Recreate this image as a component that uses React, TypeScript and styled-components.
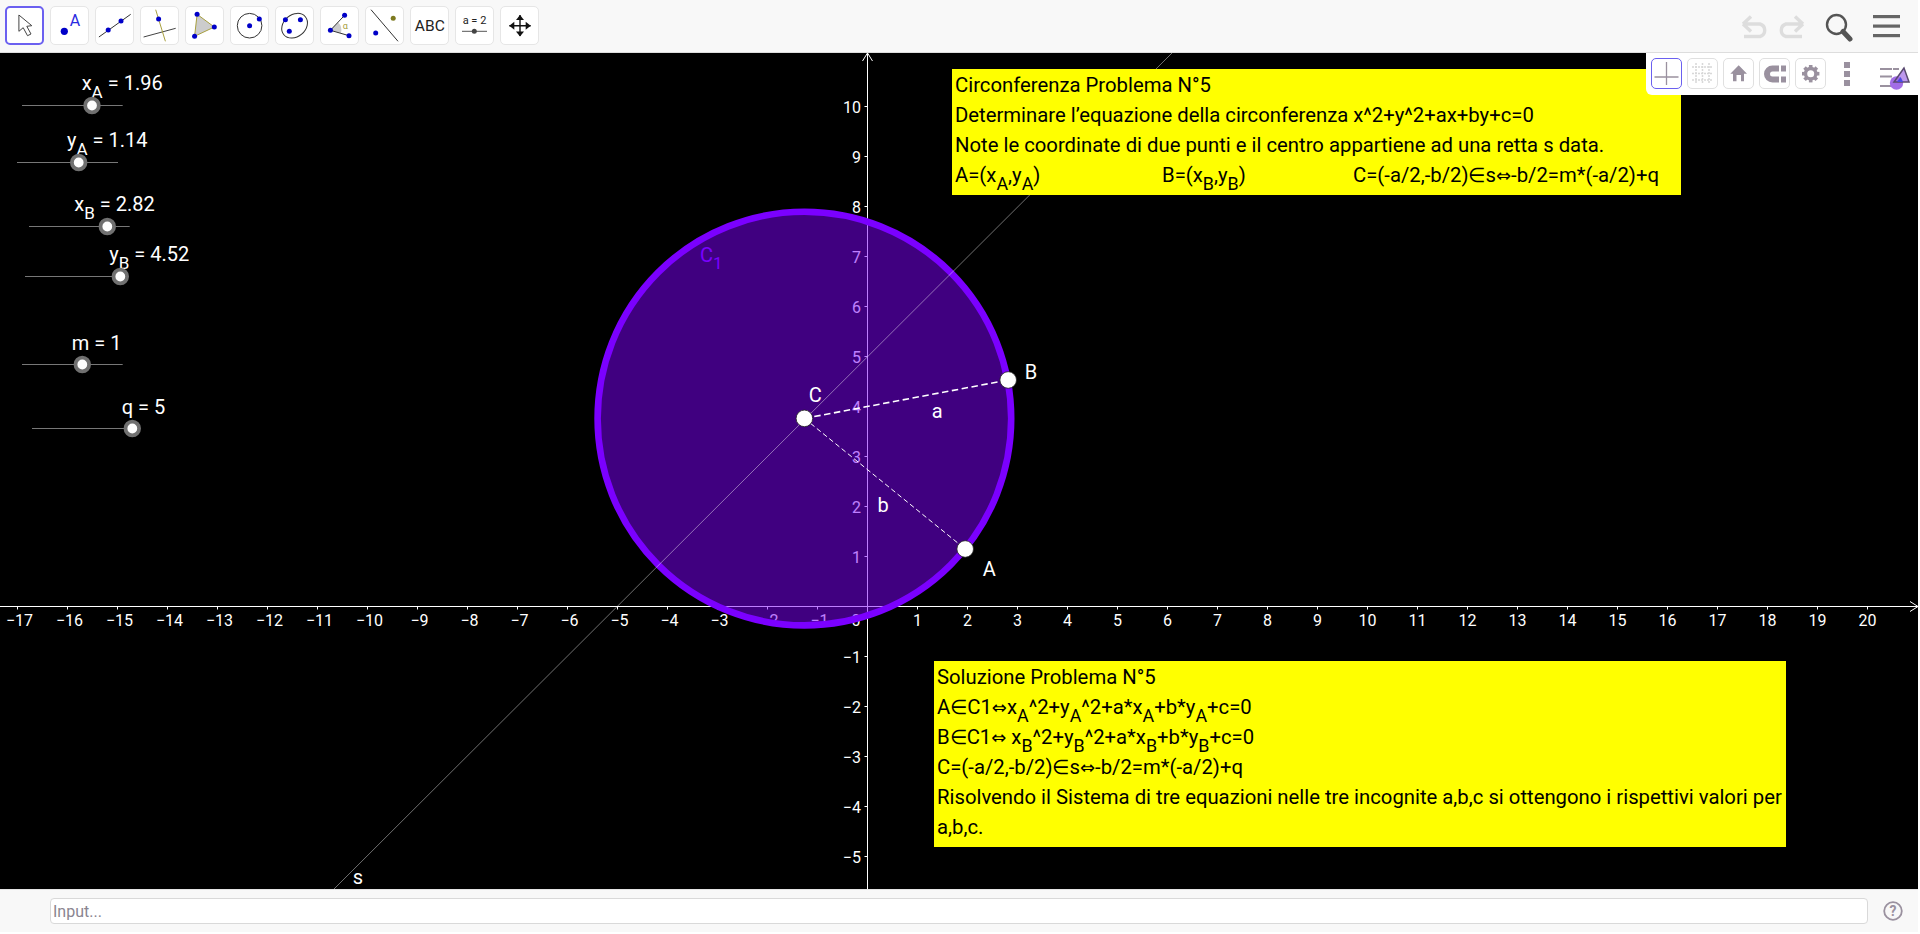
import React from 'react';
import styled, { createGlobalStyle } from 'styled-components';

const GlobalStyle = createGlobalStyle`
  html, body {
    margin: 0;
    padding: 0;
    background: #fff;
    font-family: Roboto, "Liberation Sans", sans-serif;
  }
`;

const AppFrame = styled.div`
  width: 1918px;
  height: 932px;
  display: flex;
  flex-direction: column;
  overflow: hidden;
`;

const Toolbar = styled.header`
  height: 53px;
  box-sizing: border-box;
  flex: none;
  display: flex;
  justify-content: space-between;
  padding: 6px 18px 0 5px;
  background: #f8f8f8;
  border-bottom: 1px solid #ddd;
`;

const ToolGroup = styled.div`
  display: flex;
  gap: 6px;
`;

const ToolButton = styled.div<{ $active?: boolean }>`
  width: 39px;
  height: 39px;
  box-sizing: border-box;
  background: #fff;
  border-radius: 5px;
  border: ${({ $active }) => ($active ? '2px solid #6b60f0' : '1px solid #e6e6e6')};
  display: flex;
  align-items: center;
  justify-content: center;
`;

const HistoryGroup = styled.div`
  display: flex;
  align-items: flex-start;
  padding-top: 9px;
  gap: 10px;
`;

const SearchIcon = styled.svg`
  margin: -2.5px 10px 0 10px;
`;

const Canvas = styled.main`
  position: relative;
  flex: 1;
  background: #000;
  overflow: hidden;
`;

const Plot = styled.svg`
  display: block;
  width: 100%;
  height: 100%;
`;

const AxisText = styled.text`
  font-size: 16px;
  fill: #fff;
`;

const LabelText = styled.text<{ $color?: string }>`
  font-size: 20px;
  fill: ${({ $color }) => $color || '#fff'};
`;

const NoteBox = styled.div<{ $left: number; $top: number; $width: number }>`
  position: absolute;
  left: ${({ $left }) => $left}px;
  top: ${({ $top }) => $top}px;
  width: ${({ $width }) => $width}px;
  box-sizing: border-box;
  padding: 1px 0 5px 3px;
  background: #ff0;
  color: #000;
  font-size: 20.3px;
  line-height: 30px;
  white-space: nowrap;
  sub {
    font-size: 0.88em;
    line-height: 0;
    vertical-align: -7.5px;
  }
`;

const NoteRow = styled.div`
  display: flex;
`;

const NoteCell = styled.span<{ $width: number }>`
  width: ${({ $width }) => $width}px;
  flex: none;
`;

const Iff = styled.span`
  font-family: "DejaVu Sans", sans-serif;
  font-size: 18px;
  line-height: 0;
`;

const StylePanel = styled.aside`
  position: absolute;
  top: 0;
  right: 0;
  width: 272px;
  height: 42px;
  box-sizing: border-box;
  display: flex;
  align-items: flex-start;
  gap: 5px;
  padding: 5px 0 0 5px;
  background: #fff;
  border-bottom-left-radius: 6px;
`;

const StyleButton = styled.div<{ $active?: boolean }>`
  width: 31px;
  height: 31px;
  box-sizing: border-box;
  border-radius: 5px;
  border: 1px solid ${({ $active }) => ($active ? '#6b60f0' : '#e0e0e0')};
`;

const StyleIcon = styled.svg`
  display: block;
  margin: -1px;
`;

const MoreDots = styled.div`
  margin: 4px 0 0 13px;
  display: flex;
  flex-direction: column;
  gap: 3px;
  span {
    display: block;
    width: 6px;
    height: 6px;
    background: #9a919f;
  }
`;

const ViewIcon = styled.svg`
  margin: 5px 0 0 25px;
`;

const InputBar = styled.footer`
  height: 43px;
  box-sizing: border-box;
  flex: none;
  display: flex;
  align-items: center;
  padding: 0 15px 0 50px;
  gap: 15px;
  background: #f8f8f8;
  border-top: 1px solid #e4e4e4;
`;

const AlgebraInput = styled.input`
  flex: 1;
  height: 26px;
  box-sizing: border-box;
  padding: 0 2px;
  border: 1px solid #d9d9d9;
  border-radius: 4px;
  background: #fff;
  font-family: Roboto, sans-serif;
  font-size: 16px;
  &::placeholder {
    color: #8a8590;
    opacity: 1;
  }
`;

const BLUE = '#0000c8';
const OLIVE = '#a8a040';
const GREY_ICON = '#9a919f';

const Dot = ({ x, y, r = 2.5, c = BLUE }: { x: number; y: number; r?: number; c?: string }) => (
  <circle cx={x} cy={y} r={r} fill={c} />
);

const Tool = ({ children, active }: { children: React.ReactNode; active?: boolean }) => (
  <ToolButton $active={active}>
    <svg width="39" height="39" viewBox="0 0 39 39" style={{ flex: 'none' }}>
      {children}
    </svg>
  </ToolButton>
);

const arrows = [0, 90, 180, 270];

const tools = [
  <polygon
    key="move"
    points="13.9,9 13.9,25.3 18.2,21.7 22.5,29.7 26,28 21.8,20.3 26.8,19.7"
    fill="#fff"
    stroke="#444"
  />,
  <g key="point">
    <Dot x={14.3} y={25.3} r={3.6} />
    <text x={25} y={20} fontSize="16" textAnchor="middle" fill="#2a2ae0">A</text>
  </g>,
  <g key="line">
    <line x1={3.9} y1={31} x2={35.7} y2={8.3} stroke="#333" />
    <Dot x={13.2} y={24} />
    <Dot x={26} y={15} />
  </g>,
  <g key="perp">
    <line x1={3.6} y1={31} x2={35.7} y2={22.3} stroke="#444" />
    <line x1={15.7} y1={3.7} x2={25.4} y2={35.3} stroke={OLIVE} />
    <Dot x={18.6} y={13} />
  </g>,
  <g key="polygon">
    <polygon points="12.1,8.3 29.3,21 9.6,30.3" fill="#ccc" stroke={OLIVE} />
    <Dot x={12.1} y={8.3} />
    <Dot x={29.3} y={21} />
    <Dot x={9.6} y={30.3} />
  </g>,
  <g key="circle">
    <circle cx={19.6} cy={19.7} r={12.3} fill="none" stroke="#333" />
    <Dot x={19.6} y={19.7} />
    <Dot x={29.3} y={13} />
  </g>,
  <g key="conic">
    <ellipse cx={19.6} cy={19.7} rx={14} ry={11} transform="rotate(-40 19.6 19.7)" fill="none" stroke="#333" />
    <Dot x={10.4} y={13.7} />
    <Dot x={25.4} y={13.7} />
    <Dot x={14.3} y={25.3} />
  </g>,
  <g key="angle">
    <path d="M10.4 24.3 L18 16.3 A11 11 0 0 1 21 27 Z" fill="#ccc" />
    <path d="M24.6 9.3 L10.4 24.3 L29 29.7" fill="none" stroke="#333" />
    <text x={25.4} y={23} fontSize="9" textAnchor="middle" fill={OLIVE}>α</text>
    <Dot x={24.6} y={9.3} />
    <Dot x={10.4} y={24.3} />
    <Dot x={29} y={29.7} />
  </g>,
  <g key="reflect">
    <line x1={6} y1={3.7} x2={33} y2={35.3} stroke="#333" />
    <Dot x={28.2} y={12.3} c="#7d7a20" />
    <Dot x={10.7} y={27} />
  </g>,
  <text key="abc" x={19.8} y={25} fontSize="15.5" textAnchor="middle" fill="#222">ABC</text>,
  <g key="slider">
    <text x={19.5} y={18} fontSize="11" textAnchor="middle" fill="#222">a = 2</text>
    <line x1={7} y1={25.3} x2={32} y2={25.3} stroke="#555" />
    <Dot x={19.3} y={25.3} c="#444" />
  </g>,
  <g key="translate">
    <path d="M20 9 V30 M9.3 19.7 H30.7" stroke="#111" strokeWidth="1.4" />
    {arrows.map((a) => (
      <polygon key={a} points="20,9 16,14 24,14" fill="#111" transform={`rotate(${a} 20 19.7)`} />
    ))}
  </g>,
];

const ARROW_BACK = 'M2 9 H19 A6.5 6.5 0 0 1 19 21.5 H3 M2 9 L10 1.5 M2 9 L10 16.5';

const UNIT = 50;
const ORIGIN_X = 867.5;
const ORIGIN_Y = 606.5;
const CANVAS_TOP = 53;
const CANVAS_BOTTOM = 889;
const PAGE_W = 1918;
const px = (u: number) => ORIGIN_X + u * UNIT;
const py = (u: number) => ORIGIN_Y - u * UNIT;

const range = (a: number, b: number) => Array.from({ length: b - a + 1 }, (_, i) => a + i);
const xTicks = range(-17, 20).filter((v) => v !== 0);
const yTicks = range(-5, 10).filter((v) => v !== 0);

const PointA = { x: 965.2, y: 549 };
const PointB = { x: 1008.2, y: 380 };
const PointC = { x: 804.4, y: 418.4 };

const sliders = [
  { name: 'x', sub: 'A', value: '1.96', x1: 22, x2: 122.7, y: 105.5, knob: 92, lx: 81.7, ly: 90 },
  { name: 'y', sub: 'A', value: '1.14', x1: 17, x2: 118, y: 162.5, knob: 78.7, lx: 67, ly: 147 },
  { name: 'x', sub: 'B', value: '2.82', x1: 29, x2: 129.7, y: 226.5, knob: 107.3, lx: 74.3, ly: 211 },
  { name: 'y', sub: 'B', value: '4.52', x1: 25, x2: 125.7, y: 276.5, knob: 120.3, lx: 109.3, ly: 261 },
  { name: 'm', value: '1', x1: 22, x2: 122.7, y: 364.5, knob: 82.3, lx: 71.7, ly: 350 },
  { name: 'q', value: '5', x1: 32, x2: 132.7, y: 428.5, knob: 132.3, lx: 121.7, ly: 413.5 },
];

const Graph = () => (
  <Plot viewBox={`0 ${CANVAS_TOP} ${PAGE_W} ${CANVAS_BOTTOM - CANVAS_TOP}`}>
    <g stroke="#fff" strokeWidth="1">
      <line x1={0} y1={ORIGIN_Y} x2={PAGE_W} y2={ORIGIN_Y} />
      <line x1={ORIGIN_X} y1={CANVAS_TOP} x2={ORIGIN_X} y2={CANVAS_BOTTOM} />
      <path d={`M${PAGE_W - 8} ${ORIGIN_Y - 5} L${PAGE_W} ${ORIGIN_Y} L${PAGE_W - 8} ${ORIGIN_Y + 5}`} fill="none" />
      <path d={`M${ORIGIN_X - 5} ${CANVAS_TOP + 8} L${ORIGIN_X} ${CANVAS_TOP} L${ORIGIN_X + 5} ${CANVAS_TOP + 8}`} fill="none" />
      {xTicks.map((v) => (
        <line key={v} x1={px(v)} y1={ORIGIN_Y} x2={px(v)} y2={ORIGIN_Y + 3} />
      ))}
      {yTicks.map((v) => (
        <line key={v} x1={ORIGIN_X - 3} y1={py(v)} x2={ORIGIN_X} y2={py(v)} />
      ))}
    </g>
    {xTicks.map((v) => (
      <AxisText key={v} x={px(v) + (v < 0 ? 2 : 0)} y={625.5} textAnchor="middle">
        {String(v).replace('-', '−')}
      </AxisText>
    ))}
    <AxisText x={856} y={625.5} textAnchor="middle">0</AxisText>
    {yTicks.map((v) => (
      <AxisText key={v} x={861} y={py(v) + 6} textAnchor="end">
        {String(v).replace('-', '−')}
      </AxisText>
    ))}

    <circle
      cx={PointC.x}
      cy={418.6}
      r={206.8}
      fill="#7f00ff"
      fillOpacity="0.5"
      stroke="#7b00ff"
      strokeWidth="6.6"
    />
    <LabelText x={700} y={261.7} $color="#7b00ff">
      C<tspan dy="7" fontSize="17">1</tspan>
    </LabelText>

    <line x1={334} y1={CANVAS_BOTTOM} x2={1172} y2={CANVAS_TOP} stroke="#fff" strokeOpacity="0.55" strokeWidth="0.8" />
    <line x1={PointC.x} y1={PointC.y} x2={PointB.x} y2={PointB.y} stroke="#fff" strokeWidth="1.6" strokeDasharray="6.5 3.5" />
    <line x1={PointC.x} y1={PointC.y} x2={PointA.x} y2={PointA.y} stroke="#fff" strokeWidth="1" strokeDasharray="5 3" />

    {[PointA, PointB, PointC].map((p) => (
      <circle key={p.x} cx={p.x} cy={p.y} r={8.3} fill="#fff" stroke="#222" strokeWidth="0.8" />
    ))}

    <LabelText x={1031} y={378.7} textAnchor="middle">B</LabelText>
    <LabelText x={989.3} y={576} textAnchor="middle">A</LabelText>
    <LabelText x={815.3} y={401.5} textAnchor="middle">C</LabelText>
    <LabelText x={937.3} y={417.7} textAnchor="middle">a</LabelText>
    <LabelText x={883} y={511.7} textAnchor="middle">b</LabelText>
    <LabelText x={358} y={884} textAnchor="middle">s</LabelText>

    {sliders.map((s) => (
      <g key={s.name + (s.sub || '')}>
        <line x1={s.x1} y1={s.y} x2={s.x2} y2={s.y} stroke="#777" strokeWidth="1" />
        <LabelText x={s.lx} y={s.ly}>
          {s.name}
          {s.sub && <tspan dy="8" fontSize="17">{s.sub}</tspan>}
          <tspan dy={s.sub ? -8 : 0} dx="5">= {s.value}</tspan>
        </LabelText>
        <circle cx={s.knob} cy={s.y} r={6.8} fill="#fff" stroke="#707070" strokeWidth="3.8" />
      </g>
    ))}
  </Plot>
);

const gearTeeth = [0, 45, 90, 135, 180, 225, 270, 315];

const App = () => (
  <AppFrame>
    <GlobalStyle />
    <Toolbar>
      <ToolGroup>
        {tools.map((tool, i) => (
          <Tool key={i} active={i === 0}>
            {tool}
          </Tool>
        ))}
      </ToolGroup>
      <HistoryGroup>
        <svg width="27" height="24" viewBox="0 0 27 24">
          <path d={ARROW_BACK} fill="none" stroke="#ddd" strokeWidth="3.4" />
        </svg>
        <svg width="27" height="24" viewBox="0 0 27 24">
          <path d={ARROW_BACK} fill="none" stroke="#ddd" strokeWidth="3.4" transform="matrix(-1 0 0 1 27 0)" />
        </svg>
        <SearchIcon width="28" height="29" viewBox="0 0 28 29">
          <circle cx="11.5" cy="11.5" r="9.5" fill="none" stroke="#555" strokeWidth="2.4" />
          <line x1="18" y1="18.5" x2="25" y2="26" stroke="#555" strokeWidth="5" strokeLinecap="round" />
        </SearchIcon>
        <svg width="27" height="24" viewBox="0 0 27 24">
          <rect y="0" width="27" height="3.2" fill="#666" />
          <rect y="9.5" width="27" height="3.2" fill="#666" />
          <rect y="19" width="27" height="3.2" fill="#666" />
        </svg>
      </HistoryGroup>
    </Toolbar>

    <Canvas>
      <Graph />
      <NoteBox $left={952} $top={16} $width={729}>
        <div>Circonferenza Problema N°5</div>
        <div>Determinare l’equazione della circonferenza x^2+y^2+ax+by+c=0</div>
        <div>Note le coordinate di due punti e il centro appartiene ad una retta s data.</div>
        <NoteRow>
          <NoteCell $width={207}>
            A=(x<sub>A</sub>,y<sub>A</sub>)
          </NoteCell>
          <NoteCell $width={191}>
            B=(x<sub>B</sub>,y<sub>B</sub>)
          </NoteCell>
          <span>C=(-a/2,-b/2)∈s<Iff>⇔</Iff>-b/2=m*(-a/2)+q</span>
        </NoteRow>
      </NoteBox>
      <NoteBox $left={934} $top={608} $width={852}>
        <div>Soluzione Problema N°5</div>
        <div>
          A∈C1<Iff>⇔</Iff>x<sub>A</sub>^2+y<sub>A</sub>^2+a*x<sub>A</sub>+b*y<sub>A</sub>+c=0
        </div>
        <div>
          B∈C1<Iff>⇔</Iff> x<sub>B</sub>^2+y<sub>B</sub>^2+a*x<sub>B</sub>+b*y<sub>B</sub>+c=0
        </div>
        <div>C=(-a/2,-b/2)∈s<Iff>⇔</Iff>-b/2=m*(-a/2)+q</div>
        <div>Risolvendo il Sistema di tre equazioni nelle tre incognite a,b,c si ottengono i rispettivi valori per</div>
        <div>a,b,c.</div>
      </NoteBox>
      <StylePanel>
        <StyleButton $active>
          <StyleIcon width="31" height="31">
            <path d="M3.5 19 H27.5 M15.5 4 V27" stroke={GREY_ICON} strokeWidth="1.3" />
          </StyleIcon>
        </StyleButton>
        <StyleButton>
          <StyleIcon width="31" height="31">
            <path
              d="M9 5 V26 M15.5 5 V26 M22 5 V26 M5 9 H26 M5 15.5 H26 M5 22 H26"
              stroke="#d8d8d8"
              strokeWidth="1.5"
              strokeDasharray="2 1"
            />
          </StyleIcon>
        </StyleButton>
        <StyleButton>
          <StyleIcon width="31" height="31">
            <path d="M15.7 7.3 L24 15.7 H21 V23.3 H18 V17 H13.5 V23.3 H10 V15.7 H7.3 Z" fill={GREY_ICON} />
          </StyleIcon>
        </StyleButton>
        <StyleButton>
          <StyleIcon width="31" height="31">
            <path d="M20 10.5 H13.5 A5.5 5.5 0 0 0 13.5 21.5 H20" fill="none" stroke={GREY_ICON} strokeWidth="6" />
            <rect x="22" y="7.5" width="5" height="6" fill={GREY_ICON} />
            <rect x="22" y="18.5" width="5" height="6" fill={GREY_ICON} />
          </StyleIcon>
        </StyleButton>
        <StyleButton>
          <StyleIcon width="31" height="31">
            <circle cx="15.7" cy="15.7" r="5.2" fill="none" stroke={GREY_ICON} strokeWidth="3.4" />
            {gearTeeth.map((a) => (
              <rect
                key={a}
                x="13.9"
                y="7"
                width="3.6"
                height="3.4"
                fill={GREY_ICON}
                transform={`rotate(${a} 15.7 15.7)`}
              />
            ))}
          </StyleIcon>
        </StyleButton>
        <MoreDots>
          <span />
          <span />
          <span />
        </MoreDots>
        <ViewIcon width="30" height="30" viewBox="0 0 30 30">
          <path d="M0 6 H19 M0 13.5 H12 M0 23 H12" stroke={GREY_ICON} strokeWidth="2" strokeDasharray="12 1" />
          <circle cx="16.5" cy="20" r="6.7" fill="#a26de6" />
          <polygon points="24,5 14,19 29,19" fill="#a26de6" fillOpacity="0.7" stroke="#5a4a70" strokeWidth="1.5" />
          <polygon points="17,19 20.5,14 23,19" fill="#4a4ae0" />
        </ViewIcon>
      </StylePanel>
    </Canvas>

    <InputBar>
      <AlgebraInput placeholder="Input..." readOnly />
      <svg width="20" height="20" viewBox="0 0 20 20">
        <circle cx="10" cy="10" r="8.8" fill="none" stroke={GREY_ICON} strokeWidth="1.8" />
        <text x="10" y="15" fontSize="14" fontWeight="700" textAnchor="middle" fill={GREY_ICON}>?</text>
      </svg>
    </InputBar>
  </AppFrame>
);

export default App;
